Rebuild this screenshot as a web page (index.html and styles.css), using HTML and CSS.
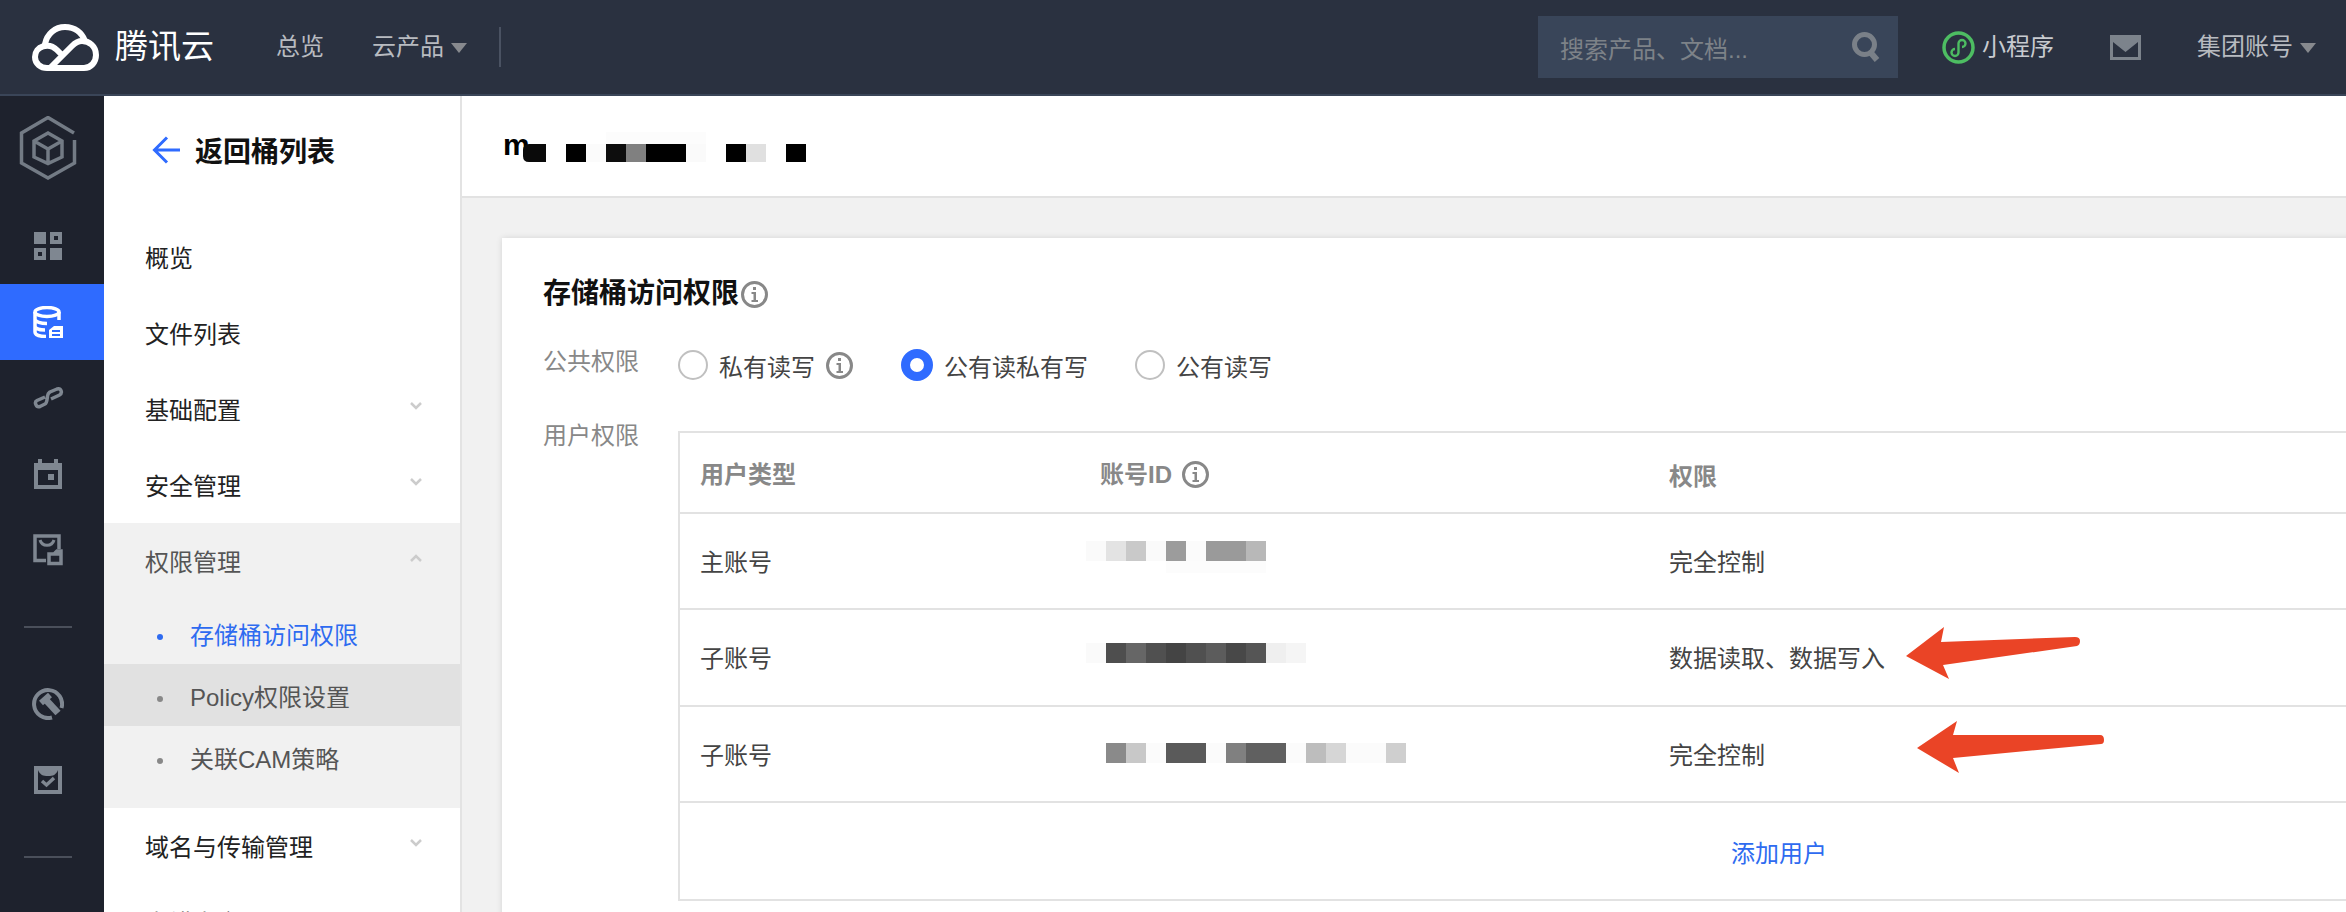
FILE: index.html
```html
<!DOCTYPE html>
<html lang="zh-CN">
<head>
    <meta charset="UTF-8">
    <title>存储桶访问权限 - 腾讯云</title>
    <link rel="stylesheet" href="styles.css">
</head>
<body>
<div class="page">
    <header class="topbar">
        <svg class="logo" width="67" height="47" viewBox="0 0 67 47" fill="none" stroke="#fff" stroke-width="6" stroke-linecap="round">
            <path d="M30 31 L25 26 C17 18 3 22 3 33 C3 40 9 44 15 44 H52 C59 44 64 38 64 31 C64 22 57 17 50 17 C46 17 43 19 40 22 L18 44"/>
            <path d="M13 20 C15 10 23 3 33 3 C43 3 50 9 53 17"/>
        </svg>
        <span class="brand">腾讯云</span>
        <a class="top-link first">总览</a>
        <a class="top-link">云产品<i class="caret"></i></a>
        <span class="top-divider"></span>
        <div class="top-right">
            <div class="search">
                <span>搜索产品、文档...</span>
                <svg width="28" height="30" viewBox="0 0 28 30" fill="none" stroke="#7a8088">
                    <circle cx="12.5" cy="12.5" r="10" stroke-width="5"/>
                    <path d="M19 21 L25 28" stroke-width="6"/>
                </svg>
            </div>
            <svg class="mini-icon" width="33" height="33" viewBox="0 0 33 33" fill="none" stroke="#4dbd62">
                <circle cx="16.5" cy="16.5" r="14.5" stroke-width="3.5"/>
                <path d="M13 18 a3.5 3.5 0 1 0 3.5 3.5 v-9 a3.5 3.5 0 1 1 3.5 3.5" stroke-width="2.4"/>
            </svg>
            <a class="top-link mini-text">小程序</a>
            <svg class="mail-icon" width="31" height="25" viewBox="0 0 31 25">
                <path fill="#7c838c" fill-rule="evenodd" d="M0 0h31v25H0z M3 7v15h25V7L15.5 17z"/>
            </svg>
            <a class="top-link account">集团账号<i class="caret"></i></a>
        </div>
    </header>

    <div class="body-row">
        <aside class="rail">
            <div class="rail-logo">
                <svg width="64" height="64" viewBox="0 0 64 64" fill="none" stroke="#737b85" stroke-width="3.5">
                    <path d="M58 17 L32 1.5 L5.5 17 V47 L32 62 L58.5 47 V24"/>
                    <path d="M32 17 L46 25 V41 L32 47.5 L18 41 V25 Z M18 25 L32 33 L46 25 M32 33 V47"/>
                </svg>
            </div>
            <div class="rail-item">
                <svg width="28" height="28" viewBox="0 0 28 28" fill="#7f8791">
                    <rect width="12" height="12"/>
                    <rect x="16" y="16" width="12" height="12"/>
                    <rect x="18" y="2" width="8" height="8" fill="none" stroke="#7f8791" stroke-width="4"/>
                    <rect x="2" y="18" width="8" height="8" fill="none" stroke="#7f8791" stroke-width="4"/>
                </svg>
            </div>
            <div class="rail-item active">
                <svg width="30" height="32" viewBox="0 0 30 32" fill="none" stroke="#fff" stroke-width="3.5">
                    <ellipse cx="14" cy="6" rx="12" ry="4.5"/>
                    <path d="M2 6 V26 C2 29 7 30.5 13 30.5 M26 6 V14 M2 13 C2 16 8 17.5 14 17.5 M2 20 C2 23 8 24 12 24"/>
                    <path fill="#fff" stroke="none" d="M16 24 L21 20 H30 V32 H16 Z"/>
                    <path stroke="#2f6bff" stroke-width="2" d="M19 25 H27 M19 29 H27"/>
                </svg>
            </div>
            <div class="rail-item">
                <svg width="32" height="24" viewBox="0 0 32 24" fill="none" stroke="#7f8791" stroke-width="3.5">
                    <path d="M13 11 L5 14.5 C2 16 4 22 8 20.5 L13 18 C15 17 15 14 15.5 10 C16 7 16.5 7 18 6 L25 3 C29 1.5 31 7 27.5 9 L19 13"/>
                </svg>
            </div>
            <div class="rail-item">
                <svg width="28" height="30" viewBox="0 0 28 30" fill="#7f8791">
                    <path fill-rule="evenodd" d="M4 0h4v4h12V0h4v4h4v26H0V4h4z M4 11v15h20V11z"/>
                    <rect x="14" y="15" width="6" height="6"/>
                </svg>
            </div>
            <div class="rail-item">
                <svg width="30" height="32" viewBox="0 0 30 32" fill="none" stroke="#7f8791" stroke-width="3.5">
                    <path d="M13 26.5 H2 V2 H26 V15"/>
                    <path d="M7 6 C9 13 19 13 21 6" stroke-width="3"/>
                    <path d="M16 20 H28 V29.5 H16 Z M21 20 L24 17 H28 V20"/>
                </svg>
            </div>
            <div class="rail-line"></div>
            <div class="rail-item">
                <svg width="32" height="32" viewBox="0 0 32 32" fill="none" stroke="#7f8791">
                    <path d="M29.5 20 A14 14 0 1 0 20 29.5" stroke-width="4"/>
                    <path d="M9 15 L18 7" stroke-width="6"/>
                    <path d="M14 12 L26 25" stroke-width="7"/>
                </svg>
            </div>
            <div class="rail-item">
                <svg width="28" height="28" viewBox="0 0 28 28" fill="none" stroke="#7f8791">
                    <rect x="2" y="2" width="24" height="24" stroke-width="4"/>
                    <path d="M4 4 H24 C22 9 19 10 14 10 C9 10 6 9 4 4 Z" fill="#7f8791" stroke="none"/>
                    <path d="M8 15 L12.5 19 L20 12" stroke-width="3.5"/>
                </svg>
            </div>
            <div class="rail-line"></div>
        </aside>

        <nav class="side-nav">
            <div class="back-row">
                <svg width="28" height="28" viewBox="0 0 28 28" fill="none" stroke="#2f6bff" stroke-width="3">
                    <path d="M28 14 H3 M15 1.5 L2.5 14 L15 26.5"/>
                </svg>
                <span>返回桶列表</span>
            </div>
            <ul class="menu">
                <li class="menu-row">概览</li>
                <li class="menu-row">文件列表</li>
                <li class="menu-row">基础配置<svg class="chev" width="12" height="8" viewBox="0 0 12 8"><path d="M1 1 L6 6 L11 1"/></svg></li>
                <li class="menu-row">安全管理<svg class="chev" width="12" height="8" viewBox="0 0 12 8"><path d="M1 1 L6 6 L11 1"/></svg></li>
                <li class="menu-group">
                    <div class="menu-row open">权限管理<svg class="chev" width="12" height="8" viewBox="0 0 12 8"><path d="M1 7 L6 2 L11 7"/></svg></div>
                    <div class="sub-row current"><i class="dot"></i>存储桶访问权限</div>
                    <div class="sub-row hover"><i class="dot"></i>Policy权限设置</div>
                    <div class="sub-row"><i class="dot"></i>关联CAM策略</div>
                </li>
                <li class="menu-row">域名与传输管理<svg class="chev" width="12" height="8" viewBox="0 0 12 8"><path d="M1 1 L6 6 L11 1"/></svg></li>
                <li class="menu-row">容错容灾</li>
            </ul>
        </nav>

        <main class="main">
            <div class="bucket-bar">
                <span class="bucket-name">m</span>
                <svg class="bucket-mosaic" width="283" height="30" viewBox="0 0 283 30" shape-rendering="crispEdges">
                    <rect x="83" y="0" width="100" height="12" fill="#fcfcfc"/>
                    <path d="M6 12 H23 V30 H6 Q0 30 0 24 V18 Q0 12 6 12 Z" fill="#0a0a0a" shape-rendering="auto"/>
                    <rect x="43" y="12" width="20" height="18" fill="#000"/>
                    <rect x="63" y="12" width="20" height="18" fill="#fbfbfb"/>
                    <rect x="83" y="12" width="20" height="18" fill="#0d0d0d"/>
                    <rect x="103" y="12" width="20" height="18" fill="#808080"/>
                    <rect x="123" y="12" width="40" height="18" fill="#000"/>
                    <rect x="163" y="12" width="20" height="18" fill="#fafafa"/>
                    <rect x="203" y="12" width="20" height="18" fill="#000"/>
                    <rect x="223" y="12" width="20" height="18" fill="#e0e0e0"/>
                    <rect x="263" y="12" width="20" height="18" fill="#000"/>
                </svg>
            </div>
            <section class="card">
                <h2 class="card-title">存储桶访问权限<svg class="info" width="27" height="27" viewBox="0 0 27 27"><use href="#info-glyph"/></svg></h2>
                <div class="form-row public">
                    <label class="form-label">公共权限</label>
                    <div class="radios">
                        <span class="radio"></span><span class="radio-text">私有读写</span>
                        <svg class="info radio-info" width="27" height="27" viewBox="0 0 27 27"><use href="#info-glyph"/></svg>
                        <span class="radio checked"></span><span class="radio-text">公有读私有写</span>
                        <span class="radio"></span><span class="radio-text">公有读写</span>
                    </div>
                </div>
                <div class="form-row">
                    <label class="form-label user-label">用户权限</label>
                    <table class="acl">
                        <colgroup><col class="col-type"><col class="col-id"><col class="col-perm"></colgroup>
                        <thead>
                            <tr>
                                <th>用户类型</th>
                                <th>账号ID<svg class="info" width="27" height="27" viewBox="0 0 27 27"><use href="#info-glyph"/></svg></th>
                                <th class="perm-head">权限</th>
                            </tr>
                        </thead>
                        <tbody>
                            <tr>
                                <td>主账号</td>
                                <td>
                                    <svg class="id-mosaic" width="220" height="32" viewBox="0 0 220 32" shape-rendering="crispEdges">
                                        <rect x="0" y="0" width="20" height="20" fill="#fafafa"/>
                                        <rect x="20" y="0" width="20" height="20" fill="#e3e3e3"/>
                                        <rect x="40" y="0" width="20" height="20" fill="#c9c9c9"/>
                                        <rect x="60" y="0" width="20" height="20" fill="#fafafa"/>
                                        <rect x="80" y="0" width="20" height="20" fill="#9c9c9c"/>
                                        <rect x="100" y="0" width="20" height="20" fill="#fbfbfb"/>
                                        <rect x="120" y="0" width="40" height="20" fill="#9a9a9a"/>
                                        <rect x="160" y="0" width="20" height="20" fill="#b8b8b8"/>
                                        <rect x="80" y="20" width="100" height="12" fill="#fcfcfc"/>
                                    </svg>
                                </td>
                                <td>完全控制</td>
                            </tr>
                            <tr>
                                <td>子账号</td>
                                <td>
                                    <svg class="id-mosaic second" width="220" height="20" viewBox="0 0 220 20" shape-rendering="crispEdges">
                                        <rect x="0" y="0" width="20" height="20" fill="#fafafa"/>
                                        <rect x="20" y="0" width="20" height="20" fill="#4e4e4e"/>
                                        <rect x="40" y="0" width="20" height="20" fill="#666"/>
                                        <rect x="60" y="0" width="20" height="20" fill="#505050"/>
                                        <rect x="80" y="0" width="20" height="20" fill="#444"/>
                                        <rect x="100" y="0" width="20" height="20" fill="#505050"/>
                                        <rect x="120" y="0" width="20" height="20" fill="#5c5c5c"/>
                                        <rect x="140" y="0" width="20" height="20" fill="#484848"/>
                                        <rect x="160" y="0" width="20" height="20" fill="#555"/>
                                        <rect x="180" y="0" width="20" height="20" fill="#efefef"/>
                                        <rect x="200" y="0" width="20" height="20" fill="#f5f5f5"/>
                                    </svg>
                                </td>
                                <td>数据读取、数据写入</td>
                            </tr>
                            <tr>
                                <td>子账号</td>
                                <td>
                                    <svg class="id-mosaic third" width="320" height="20" viewBox="0 0 320 20" shape-rendering="crispEdges">
                                        <rect x="20" y="0" width="20" height="20" fill="#8a8a8a"/>
                                        <rect x="40" y="0" width="20" height="20" fill="#c8c8c8"/>
                                        <rect x="60" y="0" width="20" height="20" fill="#fbfbfb"/>
                                        <rect x="80" y="0" width="40" height="20" fill="#5a5a5a"/>
                                        <rect x="120" y="0" width="20" height="20" fill="#fbfbfb"/>
                                        <rect x="140" y="0" width="20" height="20" fill="#808080"/>
                                        <rect x="160" y="0" width="40" height="20" fill="#606060"/>
                                        <rect x="200" y="0" width="20" height="20" fill="#fbfbfb"/>
                                        <rect x="220" y="0" width="20" height="20" fill="#bdbdbd"/>
                                        <rect x="240" y="0" width="20" height="20" fill="#d6d6d6"/>
                                        <rect x="260" y="0" width="40" height="20" fill="#fbfbfb"/>
                                        <rect x="300" y="0" width="20" height="20" fill="#cfcfcf"/>
                                    </svg>
                                </td>
                                <td>完全控制</td>
                            </tr>
                            <tr>
                                <td colspan="3" class="add-cell"><a class="add-link">添加用户</a></td>
                            </tr>
                        </tbody>
                    </table>
                </div>
            </section>
        </main>
    </div>

    <!-- red arrows drawn over the screenshot -->
    <svg class="arrows" width="2346" height="912" viewBox="0 0 2346 912" fill="#ea4426">
        <path d="M1906 656 L1944 627 L1941 642 L2075 637 Q2080 637 2080 641 Q2080 645 2077 646 L1943 665 L1949 679 Z"/>
        <path d="M1917 748 L1957 721 L1953 735 L2100 735 Q2104 735 2104 740 Q2104 744 2101 744 L1953 758 L1959 773 Z"/>
    </svg>

    <svg width="0" height="0" class="defs">
        <symbol id="info-glyph" viewBox="0 0 27 27">
            <circle cx="13.5" cy="13.5" r="12" fill="none" stroke="#888" stroke-width="3"/>
            <rect x="12" y="6" width="3" height="3" fill="#888"/>
            <path d="M10.5 11 H15 V19 H17 V21 H10.5 V19 H12.5 V13 H10.5 Z" fill="#888"/>
        </symbol>
    </svg>
</div>
</body>
</html>
```

FILE: styles.css
```css
* {
    box-sizing: border-box;
}
html, body {
    margin: 0;
    padding: 0;
    height: 912px;
    overflow: hidden;
}
body {
    font-family: "Liberation Sans", "Noto Sans CJK SC", sans-serif;
    font-size: 24px;
    color: #222;
    background-color: #f1f1f1;
}
.page {
    position: relative;
    width: 2346px;
    height: 912px;
    overflow: hidden;
}
.defs {
    display: block;
    height: 0;
}

/* top bar */
.topbar {
    display: flex;
    align-items: center;
    height: 96px;
    padding-left: 32px;
    padding-right: 30px;
    background-color: #2a3140;
    border-bottom: 2px solid #3a4558;
}
.logo {
    flex: none;
}
.brand {
    margin-left: 16px;
    font-size: 33px;
    color: #fff;
    line-height: 40px;
}
.top-link {
    display: flex;
    align-items: center;
    color: #b8bbc0;
    line-height: 32px;
    margin-left: 48px;
}
.top-link.first {
    margin-left: 62px;
}
.caret {
    display: block;
    margin-left: 7px;
    margin-top: 2px;
    border-left: 8px solid transparent;
    border-right: 8px solid transparent;
    border-top: 10px solid #87898e;
}
.top-divider {
    width: 2px;
    height: 40px;
    margin-left: 32px;
    background-color: #4a5262;
}
.top-right {
    display: flex;
    align-items: center;
    margin-left: auto;
}
.search {
    display: flex;
    align-items: center;
    justify-content: space-between;
    width: 360px;
    height: 62px;
    padding: 0 18px 0 22px;
    background-color: #394559;
    color: #7d8288;
}
.mini-icon {
    margin-left: 44px;
}
.top-link.mini-text {
    margin-left: 7px;
    color: #c8cbd0;
}
.mail-icon {
    margin-left: 56px;
}
.top-link.account {
    margin-left: 56px;
}

.body-row {
    display: flex;
    height: 816px;
}

/* dark icon rail */
.rail {
    flex: none;
    width: 104px;
    background-color: #1e222d;
}
.rail-logo {
    display: flex;
    justify-content: center;
    height: 112px;
    padding: 20px 8px 0 0;
}
.rail-item {
    display: flex;
    align-items: center;
    justify-content: center;
    height: 76px;
    padding-right: 8px;
}
.rail-item.active {
    background-color: #2f6bff;
}
.rail-line {
    width: 48px;
    height: 2px;
    margin: 38px 32px 38px 24px;
    background-color: #4a4f5a;
}

/* side menu */
.side-nav {
    flex: none;
    width: 358px;
    background-color: #fff;
    border-right: 2px solid #e3e3e3;
}
.back-row {
    display: flex;
    align-items: center;
    gap: 15px;
    height: 108px;
    padding-left: 48px;
    font-size: 28px;
    font-weight: bold;
    color: #111;
}
.menu {
    list-style: none;
    margin: 15px 0 0;
    padding: 0;
}
.menu-row {
    display: flex;
    align-items: center;
    justify-content: space-between;
    height: 76px;
    padding: 0 38px 2px 41px;
}
.menu-row.open {
    color: #555;
}
.chev {
    margin-top: -4px;
    fill: none;
    stroke: #ccc;
    stroke-width: 2.5;
}
.menu-group {
    padding-bottom: 20px;
    background-color: #f1f1f1;
}
.sub-row {
    display: flex;
    align-items: center;
    height: 62px;
    padding-left: 53px;
    color: #555;
}
.sub-row.current {
    margin-top: 3px;
    color: #2e6bf0;
}
.sub-row.hover {
    background-color: #e1e1e1;
}
.dot {
    flex: none;
    width: 6px;
    height: 6px;
    margin-top: 7px;
    margin-right: 27px;
    border-radius: 50%;
    background-color: #888;
}
.current .dot {
    background-color: #2e6bf0;
}

/* main area */
.main {
    flex: 1;
    min-width: 0;
    overflow: hidden;
}
.bucket-bar {
    display: flex;
    align-items: flex-start;
    height: 102px;
    padding: 36px 0 0 41px;
    background-color: #fff;
    border-bottom: 2px solid #e2e2e2;
}
.bucket-name {
    width: 20px;
    margin-top: -2px;
    font-size: 30px;
    font-weight: bold;
    line-height: 30px;
    color: #000;
}
.bucket-mosaic {
    display: block;
}
.card {
    margin: 40px -60px 0 40px;
    height: 700px;
    padding: 41px 0 0 41px;
    background-color: #fff;
    box-shadow: 0 0 6px rgba(0, 0, 0, 0.12);
}
.card-title {
    display: flex;
    align-items: center;
    gap: 2px;
    margin: 0 0 36px;
    font-size: 28px;
    line-height: 30px;
    color: #111;
}
.form-row {
    display: flex;
    align-items: flex-start;
}
.form-row.public {
    height: 40px;
    margin-bottom: 33px;
}
.form-label {
    flex: none;
    width: 135px;
    line-height: 34px;
    color: #888;
}
.user-label {
    padding-top: 1px;
}
.radios {
    display: flex;
    align-items: center;
    height: 40px;
}
.radio {
    flex: none;
    width: 30px;
    height: 30px;
    border: 2px solid #c0c0c0;
    border-radius: 50%;
}
.radio.checked {
    width: 32px;
    height: 32px;
    border: 9px solid #2f6bff;
}
.radio-text {
    margin-left: 11px;
    margin-right: 47px;
    color: #444;
}
.radio-info {
    margin-left: -36px;
    margin-right: 48px;
}
.acl {
    flex: none;
    width: 1800px;
    margin-top: 13px;
    table-layout: fixed;
    border-collapse: separate;
    border-spacing: 0;
    border: 2px solid #e2e2e2;
    border-right: 0;
}
.col-type {
    width: 400px;
}
.col-id {
    width: 569px;
}
.acl th, .acl td {
    border-bottom: 2px solid #e2e2e2;
    text-align: left;
    font-size: 24px;
}
.acl th {
    height: 81px;
    padding: 0 0 0 20px;
    font-weight: bold;
    color: #888;
}
.acl th .info {
    margin-left: 10px;
    vertical-align: -5px;
}
.acl th.perm-head {
    padding-top: 4px;
}
.acl td {
    height: 96px;
    padding: 0 0 2px 20px;
    color: #444;
}
.acl tbody tr:nth-child(2) td {
    height: 97px;
}
.acl tbody tr:last-child td {
    border-bottom: 0;
}
.id-mosaic {
    display: block;
    margin: -6px 0 0 -14px;
    overflow: visible;
}
.id-mosaic.second {
    margin-top: -8px;
}
.id-mosaic.third {
    margin-top: -1px;
}
.add-cell.add-cell {
    padding: 0 0 0 1051px;
}
.add-link {
    color: #2e6bf0;
}
.arrows {
    position: absolute;
    top: 0;
    left: 0;
    pointer-events: none;
}
```
